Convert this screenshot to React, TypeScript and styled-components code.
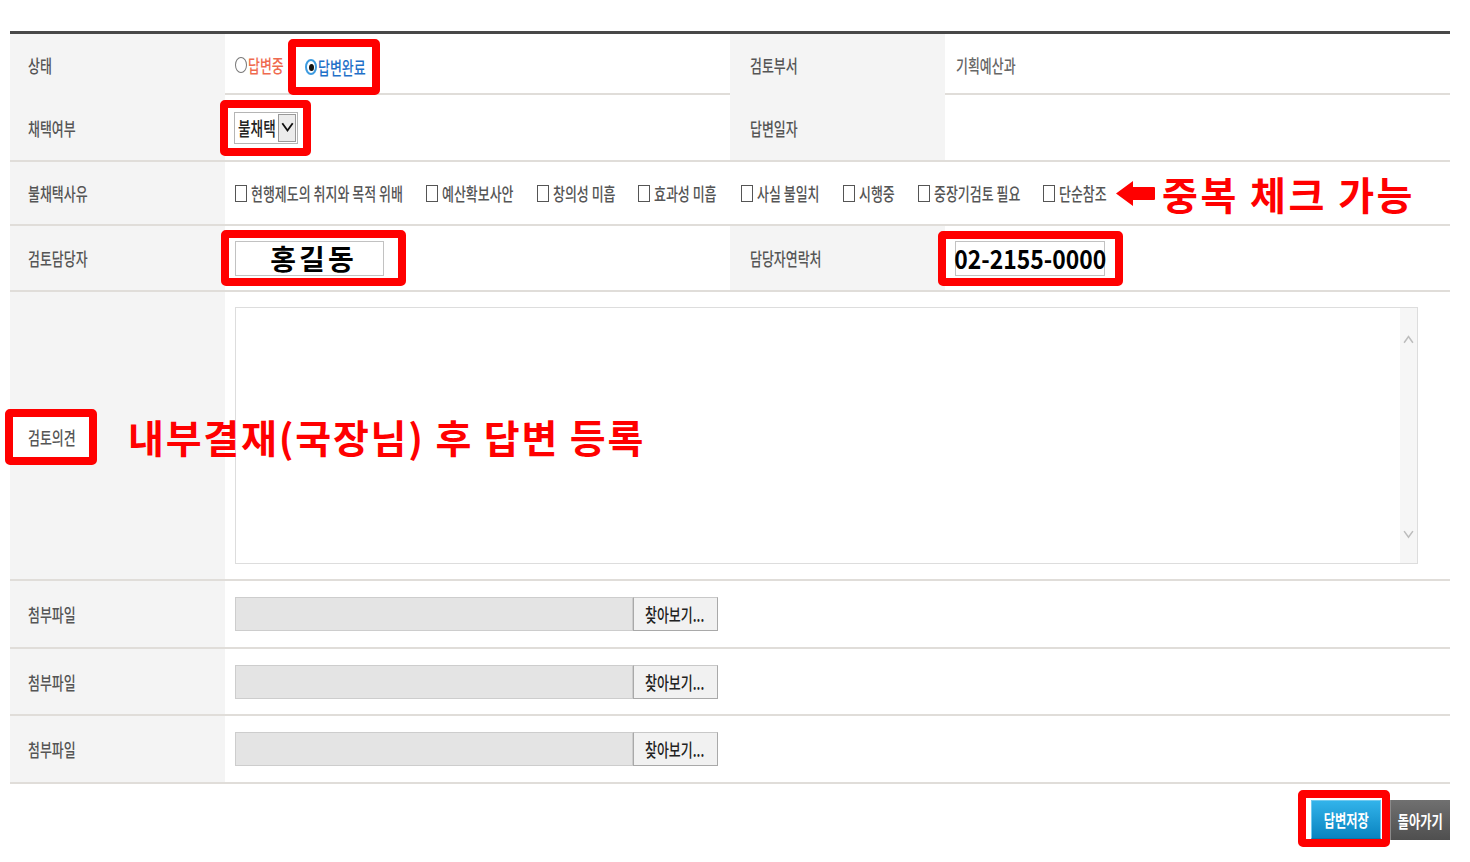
import React from 'react';
import styled, { createGlobalStyle, css } from 'styled-components';

const GlobalStyle = createGlobalStyle`
  body {
    margin: 0;
    background: #fff;
    font-family: "Noto Sans CJK KR", "Noto Sans", sans-serif;
  }
`;

// the captured page is squeezed horizontally, so the small texts are too
const squeeze = css`
  display: inline-block;
  white-space: nowrap;
  transform: scaleX(0.72);
  transform-origin: 0 50%;
`;

const Page = styled.div`
  width: 1440px;
  padding: 31px 0 40px 10px;
`;

const Table = styled.div`
  border-top: 3px solid #484848;
`;

const Row = styled.div<{ $h: number }>`
  position: relative;
  display: grid;
  grid-template-columns: 215px 505px 215px 505px;
  height: ${p => p.$h}px;
  box-sizing: border-box;
  border-bottom: 2px solid #e0ddd9;
`;

const Label = styled.div<{ $pad?: number }>`
  display: flex;
  align-items: center;
  padding-left: ${p => p.$pad ?? 18}px;
  background: #f4f4f4;
`;

const Value = styled.div<{ $wide?: boolean; $pad?: number }>`
  display: flex;
  align-items: center;
  padding-left: ${p => p.$pad ?? 10}px;
  ${p => p.$wide && 'grid-column: 2 / span 3;'}
`;

const LabelText = styled.span`
  ${squeeze};
  font-size: 18px;
  font-weight: 500;
  color: #555;
`;

const ValueText = styled.span`
  ${squeeze};
  font-size: 18px;
  font-weight: 500;
  color: #666;
`;

const Highlight = styled.div<{ $w: number; $h: number; $pl: number; $ml?: number; $mt?: number }>`
  display: flex;
  align-items: center;
  box-sizing: border-box;
  width: ${p => p.$w}px;
  height: ${p => p.$h}px;
  padding-left: ${p => p.$pl}px;
  margin-left: ${p => p.$ml ?? 0}px;
  margin-top: ${p => p.$mt ?? 0}px;
  border: 8px solid #ff0000;
  border-radius: 5px;
  background: #fff;
`;

/* radio */
const RadioSlot = styled.div`
  display: flex;
  align-items: center;
  width: 53px;
`;

const RadioMark = styled.span<{ $on?: boolean }>`
  position: relative;
  flex: none;
  width: 12px;
  height: 16px;
  box-sizing: border-box;
  border-radius: 50%;
  border: ${p => (p.$on ? '2px solid #3d9be0' : '1.5px solid #777')};
  margin-right: 1px;
  ${p =>
    p.$on &&
    css`
      &::after {
        content: '';
        position: absolute;
        left: 1.5px;
        top: 2.5px;
        width: 5px;
        height: 7px;
        border-radius: 50%;
        background: #111;
      }
    `}
`;

const ChoiceText = styled.span<{ $tone: 'red' | 'blue' }>`
  ${squeeze};
  font-size: 18px;
  font-weight: 500;
  color: ${p => (p.$tone === 'red' ? '#ef6a4f' : '#1f70c8')};
`;

/* select */
const SelectBox = styled.div`
  display: flex;
  align-items: center;
  width: 64px;
  height: 32px;
  box-sizing: border-box;
  border: 1px solid #b5b5b5;
  padding-left: 3px;
  background: #fff;
`;

const SelectText = styled.span`
  ${squeeze};
  flex: none;
  width: 40px;
  font-size: 19px;
  font-weight: 500;
  color: #222;
`;

const SelectArrow = styled.span`
  display: flex;
  align-items: center;
  justify-content: center;
  margin-left: auto;
  margin-right: 1px;
  width: 19px;
  height: 28px;
  box-sizing: border-box;
  border: 1px solid #999;
  background: #ececec;
`;

/* checkbox row */
const CheckList = styled.div`
  display: flex;
  align-items: center;
  width: 880px;
`;

const CheckSlot = styled.label<{ $w: number }>`
  display: flex;
  align-items: center;
  width: ${p => p.$w}px;
  flex: none;
`;

const CheckBox = styled.span`
  flex: none;
  width: 12px;
  height: 17px;
  box-sizing: border-box;
  border: 1.5px solid #555;
  margin-right: 4px;
  background: #fff;
`;

const CheckText = styled.span`
  ${squeeze};
  font-size: 18px;
  font-weight: 500;
  color: #555;
`;

const Note = styled.div`
  display: flex;
  align-items: center;
  gap: 7px;
  color: #ff0000;
  font-weight: 700;
  font-size: 39px;
  line-height: 1;
  letter-spacing: 2.5px;
  white-space: nowrap;
`;

const MemoNote = styled(Note)`
  position: absolute;
  left: 118px;
  top: 50%;
  transform: translateY(-48%);
  letter-spacing: 1.8px;
`;

/* inputs */
const TextBox = styled.div<{ $w: number }>`
  display: flex;
  align-items: center;
  justify-content: center;
  width: ${p => p.$w}px;
  height: 35px;
  box-sizing: border-box;
  border: 1px solid #c2c2c2;
  background: #fff;
  color: #000;
  font-weight: 700;
  line-height: 1;
  white-space: nowrap;
`;

const NameText = styled.span`
  font-size: 28px;
  letter-spacing: 3px;
  margin-left: 8px;
`;

const PhoneText = styled.span`
  display: inline-block;
  font-size: 26px;
  transform: scaleX(0.88);
`;

const MemoBox = styled.div`
  display: flex;
  width: 1183px;
  height: 257px;
  box-sizing: border-box;
  border: 1px solid #ddd;
  background: #fff;
`;

const MemoArea = styled.textarea`
  flex: 1;
  border: none;
  outline: none;
  resize: none;
  background: transparent;
`;

const ScrollTrack = styled.div`
  display: flex;
  flex-direction: column;
  align-items: center;
  justify-content: space-between;
  width: 17px;
  padding: 27px 0 24px;
  background: #f6f6f6;
`;

const FileField = styled.div`
  width: 398px;
  height: 34px;
  box-sizing: border-box;
  border: 1px solid #cdcdcd;
  background: #e4e4e4;
`;

const FileButton = styled.div`
  display: flex;
  align-items: center;
  width: 85px;
  height: 34px;
  box-sizing: border-box;
  padding-left: 11px;
  border: 1px solid #a9a9a9;
  border-top-color: #c8c8c8;
  background: #f1f1f1;
`;

const FileText = styled.span`
  ${squeeze};
  font-size: 18px;
  font-weight: 500;
  color: #222;
`;

/* bottom buttons */
const Actions = styled.div`
  display: flex;
  justify-content: flex-end;
  align-items: flex-start;
  margin-top: 6px;
`;

const ActionButton = styled.div<{ $kind: 'save' | 'back' }>`
  display: flex;
  align-items: center;
  justify-content: center;
  box-sizing: border-box;
  height: ${p => (p.$kind === 'save' ? 39 : 40)}px;
  width: ${p => (p.$kind === 'save' ? 70 : 60)}px;
  margin-top: ${p => (p.$kind === 'save' ? 2 : 10)}px;
  ${p =>
    p.$kind === 'save'
      ? css`
          background: linear-gradient(#32b3ea, #0a84c0);
          border: 1px solid #70c9ef;
          border-bottom-color: #0a74aa;
        `
      : css`
          background: linear-gradient(#707070, #4f4f4f);
          border-left: 1px solid #8a8a8a;
        `}
`;

const ButtonText = styled.span`
  ${squeeze};
  transform-origin: 50% 50%;
  font-size: 17px;
  font-weight: 700;
  color: #fff;
`;

const Chevron = ({ up, color, size }: { up?: boolean; color: string; size: number }) => (
  <svg width={size} height={size * 0.8} viewBox="0 0 10 8">
    <polyline
      points={up ? '1,7 5,1.5 9,7' : '1,1 5,6.5 9,1'}
      fill="none"
      stroke={color}
      strokeWidth={1.4}
    />
  </svg>
);

const LeftArrow = () => (
  <svg width="40" height="27" viewBox="0 0 40 27">
    <path d="M1 13.5 L18 1 L18 7 L39 7 Q40 7 40 8 L40 19 Q40 20 39 20 L18 20 L18 26 Z" fill="#ff0000" />
  </svg>
);

const reasons: [string, number][] = [
  ['현행제도의 취지와 목적 위배', 191],
  ['예산확보사안', 111],
  ['창의성 미흡', 101],
  ['효과성 미흡', 103],
  ['사실 불일치', 102],
  ['시행중', 75],
  ['중장기검토 필요', 125],
  ['단순참조', 72],
];

const FileRow = ({ h }: { h: number }) => (
  <Row $h={h}>
    <Label>
      <LabelText>첨부파일</LabelText>
    </Label>
    <Value $wide>
      <FileField />
      <FileButton>
        <FileText>찾아보기...</FileText>
      </FileButton>
    </Value>
  </Row>
);

export default function App() {
  return (
    <Page>
      <GlobalStyle />
      <Table>
        <Row $h={61}>
          <Label>
            <LabelText>상태</LabelText>
          </Label>
          <Value>
            <RadioSlot>
              <RadioMark />
              <ChoiceText $tone="red">답변중</ChoiceText>
            </RadioSlot>
            <Highlight $w={92} $h={56} $pl={9} $mt={5}>
              <RadioMark $on />
              <ChoiceText $tone="blue">답변완료</ChoiceText>
            </Highlight>
          </Value>
          <Label $pad={20}>
            <LabelText>검토부서</LabelText>
          </Label>
          <Value $pad={11}>
            <ValueText>기획예산과</ValueText>
          </Value>
        </Row>

        <Row $h={67}>
          <Label>
            <LabelText>채택여부</LabelText>
          </Label>
          <Value>
            <Highlight $w={91} $h={56} $pl={6} $ml={-15}>
              <SelectBox>
                <SelectText>불채택</SelectText>
                <SelectArrow>
                  <Chevron color="#111" size={13} />
                </SelectArrow>
              </SelectBox>
            </Highlight>
          </Value>
          <Label $pad={20}>
            <LabelText>답변일자</LabelText>
          </Label>
          <Value />
        </Row>

        <Row $h={64}>
          <Label>
            <LabelText>불채택사유</LabelText>
          </Label>
          <Value $wide>
            <CheckList>
              {reasons.map(([text, w]) => (
                <CheckSlot key={text} $w={w}>
                  <CheckBox />
                  <CheckText>{text}</CheckText>
                </CheckSlot>
              ))}
            </CheckList>
            <Note>
              <LeftArrow />
              중복 체크 가능
            </Note>
          </Value>
        </Row>

        <Row $h={66}>
          <Label>
            <LabelText>검토담당자</LabelText>
          </Label>
          <Value>
            <Highlight $w={185} $h={56} $pl={6} $ml={-14}>
              <TextBox $w={149}>
                <NameText>홍길동</NameText>
              </TextBox>
            </Highlight>
          </Value>
          <Label $pad={20}>
            <LabelText>담당자연락처</LabelText>
          </Label>
          <Value>
            <Highlight $w={185} $h={55} $pl={9} $ml={-17}>
              <TextBox $w={150}>
                <PhoneText>02-2155-0000</PhoneText>
              </TextBox>
            </Highlight>
          </Value>
        </Row>

        <Row $h={289}>
          <Label $pad={0}>
            <Highlight $w={92} $h={56} $pl={15} $ml={-5} $mt={2}>
              <LabelText>검토의견</LabelText>
            </Highlight>
          </Label>
          <Value $wide>
            <MemoBox>
              <MemoArea />
              <ScrollTrack>
                <Chevron up color="#bdbdbd" size={11} />
                <Chevron color="#bdbdbd" size={11} />
              </ScrollTrack>
            </MemoBox>
          </Value>
          <MemoNote>내부결재(국장님) 후 답변 등록</MemoNote>
        </Row>

        <FileRow h={68} />
        <FileRow h={67} />
        <FileRow h={68} />
      </Table>

      <Actions>
        <Highlight $w={92} $h={57} $pl={5} style={{ alignItems: 'flex-start' }}>
          <ActionButton $kind="save">
            <ButtonText>답변저장</ButtonText>
          </ActionButton>
        </Highlight>
        <ActionButton $kind="back">
          <ButtonText>돌아가기</ButtonText>
        </ActionButton>
      </Actions>
    </Page>
  );
}
